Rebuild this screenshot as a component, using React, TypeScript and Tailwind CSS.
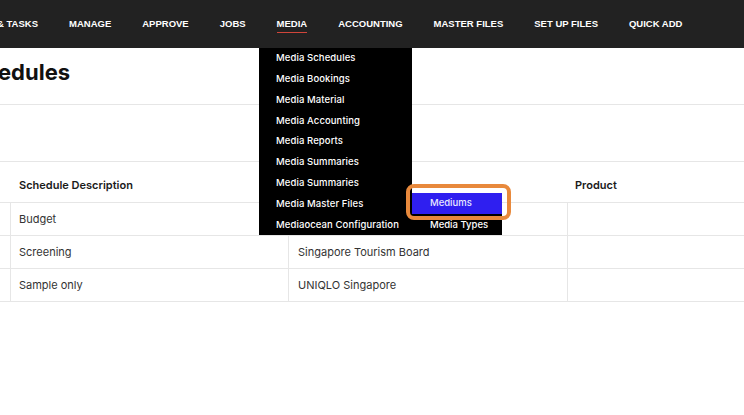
import React from 'react';

const navItems = ['& TASKS', 'MANAGE', 'APPROVE', 'JOBS', 'MEDIA', 'ACCOUNTING', 'MASTER FILES', 'SET UP FILES', 'QUICK ADD'];

const mediaMenu = [
  'Media Schedules',
  'Media Bookings',
  'Media Material',
  'Media Accounting',
  'Media Reports',
  'Media Summaries',
  'Media Summaries',
  'Media Master Files',
  'Mediaocean Configuration',
];

const rows = [
  { desc: 'Budget', client: '', product: '' },
  { desc: 'Screening', client: 'Singapore Tourism Board', product: '' },
  { desc: 'Sample only', client: 'UNIQLO Singapore', product: '' },
];

export default function App() {
  return (
    <div className="relative w-[744px] h-[415px] overflow-hidden bg-white font-['Inter',sans-serif] text-[#222]">
      {/* Top nav */}
      <nav className="h-12 bg-[#222222] flex items-center gap-[31px] -ml-[3px] font-['Liberation_Sans',Arial,sans-serif] text-[9.5px] font-bold text-white whitespace-nowrap">
        {navItems.map((item) => (
          <div key={item} className="relative">
            {item}
            {item === 'MEDIA' && (
              <span className="absolute left-0 right-0 top-[15px] h-[1.5px] bg-[#d0453a]" />
            )}
          </div>
        ))}
      </nav>

      {/* Page header */}
      <div className="h-[57px] border-b border-[#e6e6e6] pt-[10px]">
        <h1 className="-ml-[2px] text-[22px] leading-[28px] font-bold text-[#111]">edules</h1>
      </div>
      <div className="h-[57px] border-b border-[#e6e6e6]" />

      {/* Table */}
      <div className="text-[11px]">
        <div className="grid grid-cols-[11px_278px_279px_1fr] h-[41px] border-b border-[#e6e6e6] items-center pt-[6px] font-semibold text-[#1a1a1a]">
          <div />
          <div className="pl-[8px]">Schedule Description</div>
          <div />
          <div className="pl-[7px]">Product</div>
        </div>
        {rows.map((r) => (
          <div key={r.desc} className="grid grid-cols-[11px_278px_279px_1fr] h-[33px] border-b border-[#e6e6e6] text-[#333]">
            <div className="border-r border-[#e6e6e6]" />
            <div className="pl-[8px] flex items-center border-r border-[#e6e6e6]">{r.desc}</div>
            <div className="pl-[9px] flex items-center border-r border-[#e6e6e6]">{r.client}</div>
            <div className="pl-[8px] flex items-center">{r.product}</div>
          </div>
        ))}
      </div>

      {/* Media dropdown */}
      <div className="absolute left-[259px] top-12 w-[153px] h-[187px] bg-black text-white text-[9.5px] font-medium tracking-[0.1px]">
        {mediaMenu.map((m, i) => (
          <div key={i} className="h-[20.8px] pl-[17px] flex items-center whitespace-nowrap">
            {m}
          </div>
        ))}
      </div>

      {/* Sub menu */}
      <div className="absolute left-[412px] top-[193px] w-[90px] h-[42px] bg-black text-white text-[9.5px] font-medium">
        <div className="h-[21px] bg-[#2f1ff0] pl-[18px] flex items-center text-[#e8e8ff]">Mediums</div>
        <div className="h-[21px] pl-[18px] flex items-center pt-[1px]">Media Types</div>
      </div>

      {/* Highlight ring */}
      <div className="absolute left-[406px] top-[184px] w-[105px] h-[36px] rounded-[8px] border-[4px] border-[#e8893c]" />
    </div>
  );
}
